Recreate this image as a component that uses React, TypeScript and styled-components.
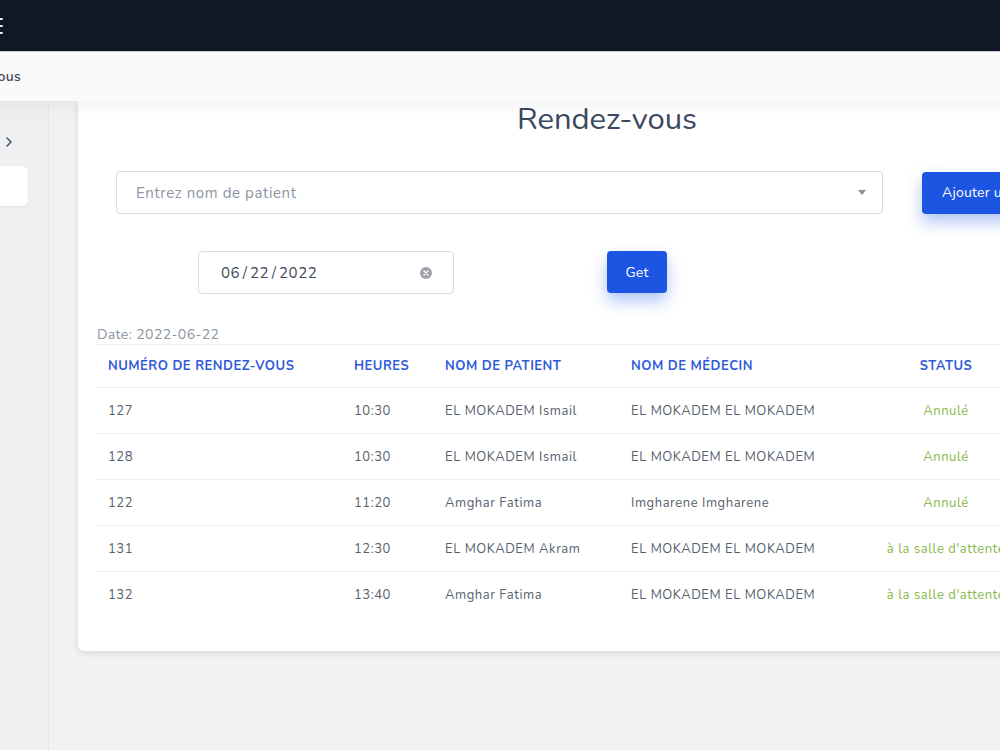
import React from "react";
import styled, { createGlobalStyle } from "styled-components";

// global
const GlobalStyle = createGlobalStyle`
  html, body {
    margin: 0;
    padding: 0;
    overflow: hidden;
    background: #f0f2f4;
    font-family: "Nunito", "Lato", "Open Sans", sans-serif;
  }
  * { box-sizing: border-box; }
`;

// style
const Page = styled.div`
  width: 1374px;
  height: 750px;
  margin-left: -208px;
  display: flex;
  flex-direction: column;
`;

const Header = styled.header`
  position: relative;
  z-index: 2;
  box-shadow: 0 6px 18px rgba(0, 0, 0, 0.05);
`;

const TopBar = styled.div`
  height: 51px;
  background: #101828;
  display: flex;
  align-items: center;
`;

const BurgerSlot = styled.div`
  width: 211px;
  display: flex;
  justify-content: flex-end;
`;

const Burger = styled.div`
  width: 20px;
  display: flex;
  flex-direction: column;
  gap: 5px;
  span {
    display: block;
    height: 2px;
    background: #e6e8ee;
    border-radius: 1px;
  }
`;

const SubBar = styled.div`
  height: 50px;
  background: #fafafa;
  border-top: 1px solid #c9ccd3;
  display: flex;
  align-items: center;
`;

const Crumb = styled.div`
  width: 229px;
  display: flex;
  justify-content: flex-end;
  font-size: 14px;
  font-weight: 600;
  color: #3c4458;
  letter-spacing: 0.3px;
`;

const Body = styled.div`
  flex: 1;
  display: flex;
`;

const Sidebar = styled.aside`
  width: 257px;
  flex-shrink: 0;
  background: #eef0f2;
  border-right: 1px solid #e4e6e9;
  padding: 24px 20px 0 16px;
  display: flex;
  flex-direction: column;
  gap: 8px;
`;

const NavGroup = styled.div`
  height: 33px;
  display: flex;
  align-items: center;
  justify-content: flex-end;
  padding-right: 15px;
  color: #4b5570;
`;

const NavItem = styled.div`
  height: 40px;
  background: #ffffff;
  border-radius: 6px;
  box-shadow: 0 1px 3px rgba(0, 0, 0, 0.06);
`;

const Main = styled.main`
  flex: 1;
  padding: 0 30px 0 29px;
`;

const Card = styled.section`
  background: #ffffff;
  border-radius: 0 0 6px 6px;
  box-shadow: 0 2px 6px rgba(0, 0, 0, 0.12);
  padding: 0 18px 33px;
  display: flex;
  flex-direction: column;
`;

const Title = styled.h1`
  margin: 0;
  font-size: 31px;
  line-height: 36px;
  font-weight: 400;
  color: #3d4760;
  text-align: center;
`;

const SearchRow = styled.div`
  display: flex;
  align-items: center;
  margin-top: 34px;
  padding-left: 20px;
  gap: 39px;
`;

const Field = styled.div<{ $w: number }>`
  width: ${(p) => p.$w}px;
  height: 43px;
  border: 1px solid #d8dbe0;
  border-radius: 4px;
  display: flex;
  align-items: center;
  justify-content: space-between;
  padding: 0 16px 0 19px;
  font-size: 15px;
  letter-spacing: 0.6px;
`;

const Placeholder = styled.span`
  color: #8c94a3;
`;

const DateText = styled.span`
  color: #3f475a;
  padding-left: 3px;
  word-spacing: -2px;
`;

const Caret = styled.span`
  width: 0;
  height: 0;
  border-left: 4px solid transparent;
  border-right: 4px solid transparent;
  border-top: 5px solid #8a8f99;
`;

const ClearIcon = styled.span`
  width: 12px;
  height: 12px;
  border-radius: 50%;
  background: #9ea1a9;
  display: flex;
  align-items: center;
  justify-content: center;
  margin-right: 5px;
`;

const BlueButton = styled.button<{ $w: number; $center?: boolean }>`
  width: ${(p) => p.$w}px;
  height: 42px;
  flex-shrink: 0;
  border: none;
  border-radius: 4px;
  background: #1b55e2;
  color: #ffffff;
  font-family: inherit;
  font-size: 14px;
  letter-spacing: 0.2px;
  box-shadow: 0 8px 16px rgba(27, 85, 226, 0.35);
  white-space: nowrap;
  overflow: hidden;
  padding: ${(p) => (p.$center ? "0" : "0 20px")};
  text-align: ${(p) => (p.$center ? "center" : "left")};
`;

const DateRow = styled.div`
  display: flex;
  align-items: flex-start;
  margin-top: 37px;
  padding-left: 102px;
  gap: 153px;
`;

const DateLabel = styled.div`
  margin-top: 32px;
  font-size: 14px;
  color: #8a92a1;
  letter-spacing: 0.4px;
  padding-left: 1px;
  line-height: 18px;
`;

const Table = styled.table`
  width: 100%;
  margin-top: 0;
  border-collapse: collapse;
  table-layout: fixed;
`;

const Th = styled.th<{ $center?: boolean }>`
  height: 43px;
  padding: 0 12px;
  border-top: 1px solid #ebedf0;
  border-bottom: 1px solid #ebedf0;
  text-align: ${(p) => (p.$center ? "center" : "left")};
  text-transform: uppercase;
  font-size: 13px;
  font-weight: 700;
  letter-spacing: 0.5px;
  color: #2f5bd8;
  white-space: nowrap;
`;

const Td = styled.td<{ $status?: boolean }>`
  height: 46px;
  padding: 0 12px;
  border-bottom: 1px solid #ebedf0;
  text-align: ${(p) => (p.$status ? "center" : "left")};
  font-size: 13px;
  letter-spacing: 0.55px;
  color: ${(p) => (p.$status ? "#86b94a" : "#575f6e")};
  white-space: nowrap;
  overflow: visible;
`;

const LastRow = styled.tr`
  td { border-bottom: none; }
`;

// data
const rows = [
  { id: "127", time: "10:30", patient: "EL MOKADEM Ismail", doctor: "EL MOKADEM EL MOKADEM", status: "Annulé" },
  { id: "128", time: "10:30", patient: "EL MOKADEM Ismail", doctor: "EL MOKADEM EL MOKADEM", status: "Annulé" },
  { id: "122", time: "11:20", patient: "Amghar Fatima", doctor: "Imgharene Imgharene", status: "Annulé" },
  { id: "131", time: "12:30", patient: "EL MOKADEM Akram", doctor: "EL MOKADEM EL MOKADEM", status: "à la salle d'attente" },
  { id: "132", time: "13:40", patient: "Amghar Fatima", doctor: "EL MOKADEM EL MOKADEM", status: "à la salle d'attente" },
];

// render
function App() {
  return (
    <>
      <GlobalStyle />
      <Page>
        <Header>
          <TopBar>
            <BurgerSlot>
              <Burger>
                <span />
                <span />
                <span />
              </Burger>
            </BurgerSlot>
          </TopBar>
          <SubBar>
            <Crumb>Rendez-vous</Crumb>
          </SubBar>
        </Header>
        <Body>
          <Sidebar>
            <NavGroup>
              <svg width="8" height="12" viewBox="0 0 8 12" fill="none">
                <path d="M2 2l4 4-4 4" stroke="currentColor" strokeWidth="1.6" strokeLinecap="round" strokeLinejoin="round" />
              </svg>
            </NavGroup>
            <NavItem />
          </Sidebar>
          <Main>
            <Card>
              <Title>Rendez-vous</Title>
              <SearchRow>
                <Field $w={767}>
                  <Placeholder>Entrez nom de patient</Placeholder>
                  <Caret />
                </Field>
                <BlueButton $w={180}>Ajouter un rendez-vous</BlueButton>
              </SearchRow>
              <DateRow>
                <Field $w={256}>
                  <DateText>06 / 22 / 2022</DateText>
                  <ClearIcon>
                    <svg width="6" height="6" viewBox="0 0 6 6">
                      <path d="M1 1l4 4M5 1L1 5" stroke="#fff" strokeWidth="1.3" strokeLinecap="round" />
                    </svg>
                  </ClearIcon>
                </Field>
                <BlueButton $w={60} $center>
                  Get
                </BlueButton>
              </DateRow>
              <DateLabel>Date: 2022-06-22</DateLabel>
              <Table>
                <colgroup>
                  <col style={{ width: 246 }} />
                  <col style={{ width: 91 }} />
                  <col style={{ width: 186 }} />
                  <col style={{ width: 230 }} />
                  <col style={{ width: 194 }} />
                  <col />
                </colgroup>
                <thead>
                  <tr>
                    <Th>Numéro de rendez-vous</Th>
                    <Th>Heures</Th>
                    <Th>Nom de patient</Th>
                    <Th>Nom de médecin</Th>
                    <Th $center>Status</Th>
                    <Th />
                  </tr>
                </thead>
                <tbody>
                  {rows.map((r, i) => {
                    const cells = (
                      <>
                        <Td>{r.id}</Td>
                        <Td>{r.time}</Td>
                        <Td>{r.patient}</Td>
                        <Td>{r.doctor}</Td>
                        <Td $status>{r.status}</Td>
                        <Td />
                      </>
                    );
                    return i === rows.length - 1 ? (
                      <LastRow key={r.id}>{cells}</LastRow>
                    ) : (
                      <tr key={r.id}>{cells}</tr>
                    );
                  })}
                </tbody>
              </Table>
            </Card>
          </Main>
        </Body>
      </Page>
    </>
  );
}

export default App;
